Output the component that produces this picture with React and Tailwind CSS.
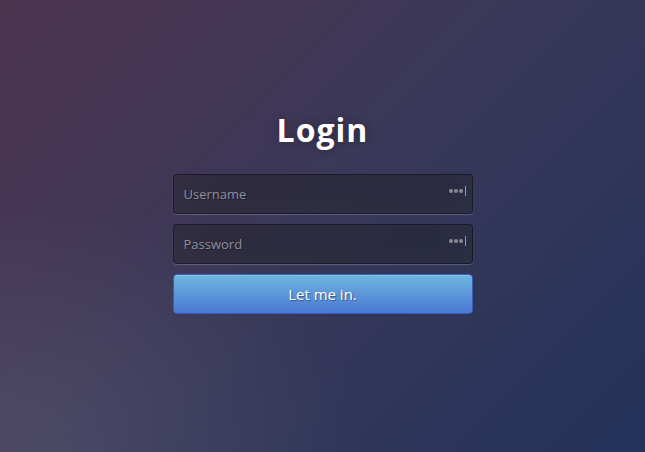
import React from "react";

const Field = ({ type, placeholder }) => (
  <div className="relative mb-[10px]">
    <input
      type={type}
      placeholder={placeholder}
      className="w-full h-[40px] px-[10px] rounded-[4px] border border-[rgba(0,0,0,0.3)] bg-[rgba(0,0,0,0.3)] text-[13px] text-white placeholder:text-[#8d8f9c] outline-none shadow-[inset_0_-5px_45px_rgba(100,100,100,0.2),0_1px_1px_rgba(255,255,255,0.2)] [text-shadow:1px_1px_1px_rgba(0,0,0,0.3)]"
    />
    <span className="absolute right-[7px] top-[12px] flex items-center gap-[1px]">
      <span className="w-[4px] h-[4px] rounded-full bg-[#8a8a94]" />
      <span className="w-[4px] h-[4px] rounded-full bg-[#8a8a94]" />
      <span className="w-[4px] h-[4px] rounded-full bg-[#8a8a94]" />
      <span className="ml-[1px] w-[1px] h-[10px] bg-[#9a9aa4]" />
    </span>
  </div>
);

export default function App() {
  return (
    <div
      className="w-full h-screen flex items-center justify-center overflow-hidden bg-[#32375a] bg-[radial-gradient(ellipse_farthest-corner_at_0%_100%,rgba(110,110,130,0.3)_5%,rgba(110,110,130,0)_40%),linear-gradient(135deg,#4c3350_0%,#3b3858_45%,#23335a_100%)]"
      style={{ fontFamily: "'Open Sans', 'Liberation Sans', sans-serif" }}
    >
      <div className="w-[300px] h-[300px] pt-[34px]">
        <h1 className="h-[40px] leading-[40px] mb-[24px] text-center text-[32px] font-bold text-white tracking-[1px] [text-shadow:0_0_10px_rgba(0,0,0,0.3)]">
          Login
        </h1>
        <form onSubmit={(e) => e.preventDefault()}>
          <Field type="text" placeholder="Username" />
          <Field type="password" placeholder="Password" />
          <button
            type="submit"
            className="w-full h-[40px] rounded-[4px] border border-[#3762bc] bg-[linear-gradient(to_bottom,#6eb6de,#4a77d4)] text-[15px] text-white [text-shadow:1px_1px_1px_rgba(0,0,0,0.4)] shadow-[inset_0_1px_0_rgba(255,255,255,0.2),0_1px_2px_rgba(0,0,0,0.05)]"
          >
            Let me in.
          </button>
        </form>
      </div>
    </div>
  );
}
